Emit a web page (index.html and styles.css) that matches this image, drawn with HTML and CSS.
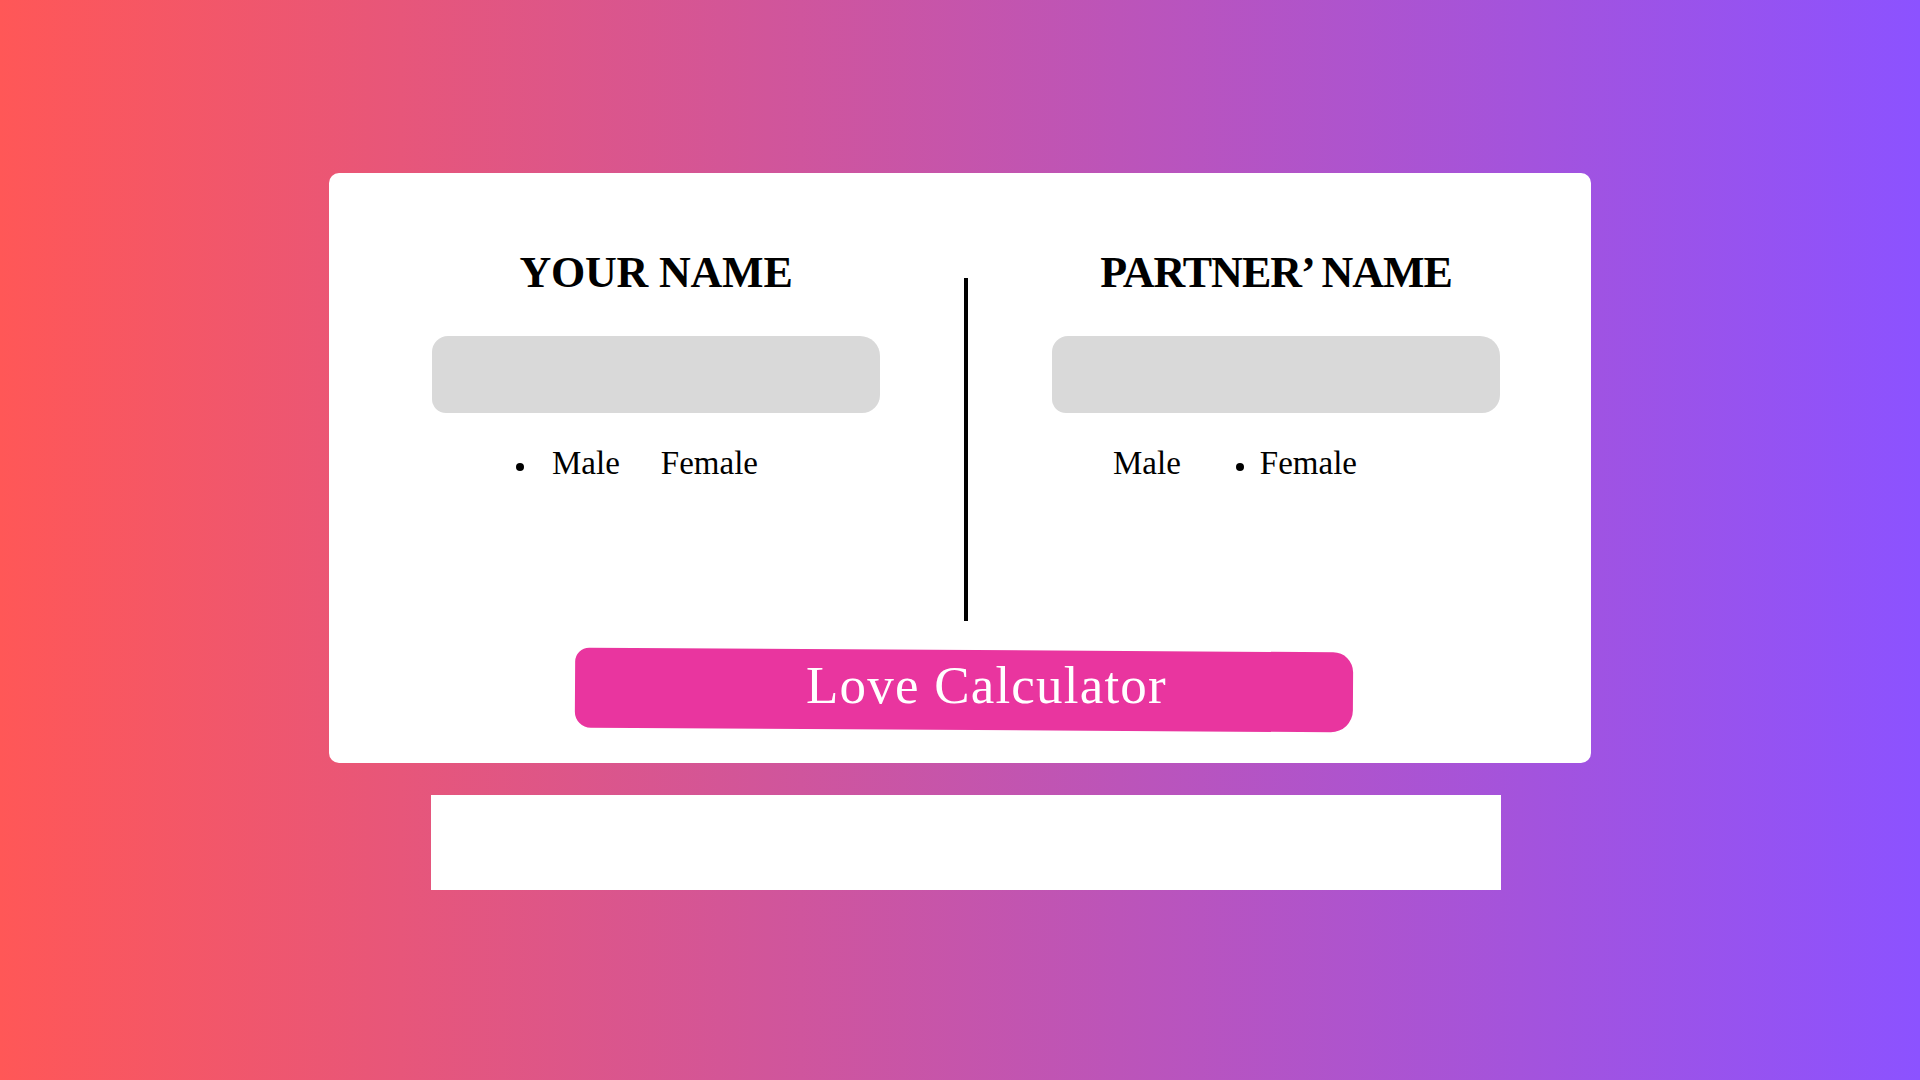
FILE: index.html
```html
<!DOCTYPE html>
<html lang="en">
<head>
<meta charset="utf-8">
<title>Love Calculator</title>
<link rel="stylesheet" href="styles.css">
</head>
<body>
  <main class="page">
    <section class="card">
      <div class="columns">
        <div class="col col-left">
          <h2 class="heading">YOUR NAME</h2>
          <div class="field"></div>
          <div class="options options-left">
            <span class="dot dot-left"></span>
            <span class="opt opt-male">Male</span>
            <span class="opt opt-female-left">Female</span>
          </div>
        </div>
        <div class="divider"></div>
        <div class="col col-right">
          <h2 class="heading heading-tight">PARTNER’ NAME</h2>
          <div class="field"></div>
          <div class="options options-right">
            <span class="opt opt-male">Male</span>
            <span class="dot dot-right"></span>
            <span class="opt">Female</span>
          </div>
        </div>
      </div>
      <div class="button"><span class="button-label">Love Calculator</span></div>
    </section>
    <div class="result"></div>
  </main>
</body>
</html>
```

FILE: styles.css
```css
* { box-sizing: border-box; }

html, body {
  margin: 0;
  padding: 0;
}

body {
  width: 1920px;
  height: 1080px;
  overflow: hidden;
  background: linear-gradient(90deg, #ff5757 0%, #8c52ff 100%);
  font-family: "Liberation Serif", "Times New Roman", serif;
  color: #000;
}

.page {
  width: 1262px;
  margin: 0 0 0 329px;
  padding-top: 173px;
  display: flex;
  flex-direction: column;
}

.card {
  width: 1262px;
  height: 590px;
  background: #fff;
  border-radius: 10px;
  padding: 78px 0 0 103px;
  display: flex;
  flex-direction: column;
}

.columns {
  display: grid;
  grid-template-columns: 448px 4px 448px;
  column-gap: 84px;
  align-items: start;
}

.col {
  display: flex;
  flex-direction: column;
}

.heading {
  margin: 0;
  font-size: 44px;
  line-height: 44px;
  font-weight: 700;
  text-align: center;
  white-space: nowrap;
  letter-spacing: -0.2px;
}

.heading-tight {
  letter-spacing: -1px;
}

.field {
  margin-top: 41px;
  height: 77px;
  background: #d9d9d9;
  border-radius: 16px 20px 18px 14px;
}

.options {
  margin-top: 32px;
  display: flex;
  align-items: flex-start;
  font-size: 33px;
  line-height: 36px;
}

.options-left { padding-left: 84px; }
.options-right { padding-left: 61px; }

.dot {
  width: 8px;
  height: 8px;
  border-radius: 50%;
  background: #000;
  margin-top: 18px;
  flex: none;
}

.dot-left { margin-right: 28px; }
.opt-female-left { margin-left: 41px; }
.dot-right { margin-left: 55px; margin-right: 16px; }

.divider {
  margin-top: 27px;
  width: 4px;
  height: 343px;
  background: #000;
}

.button {
  position: relative;
  margin-top: 29px;
  margin-left: 143px;
  width: 778px;
  height: 80px;
  padding: 0 0 10px 231px;
}

.button::before {
  content: "";
  position: absolute;
  inset: 0;
  background: #e9359f;
  border-radius: 14px 20px 22px 16px;
  transform: rotate(0.35deg);
}

.button-label {
  position: relative;
  display: block;
  color: #fff;
  font-size: 53px;
  line-height: 70px;
  letter-spacing: 1.2px;
  white-space: nowrap;
}

.result {
  margin-top: 32px;
  margin-left: 102px;
  width: 1070px;
  height: 95px;
  background: #fff;
}
```
